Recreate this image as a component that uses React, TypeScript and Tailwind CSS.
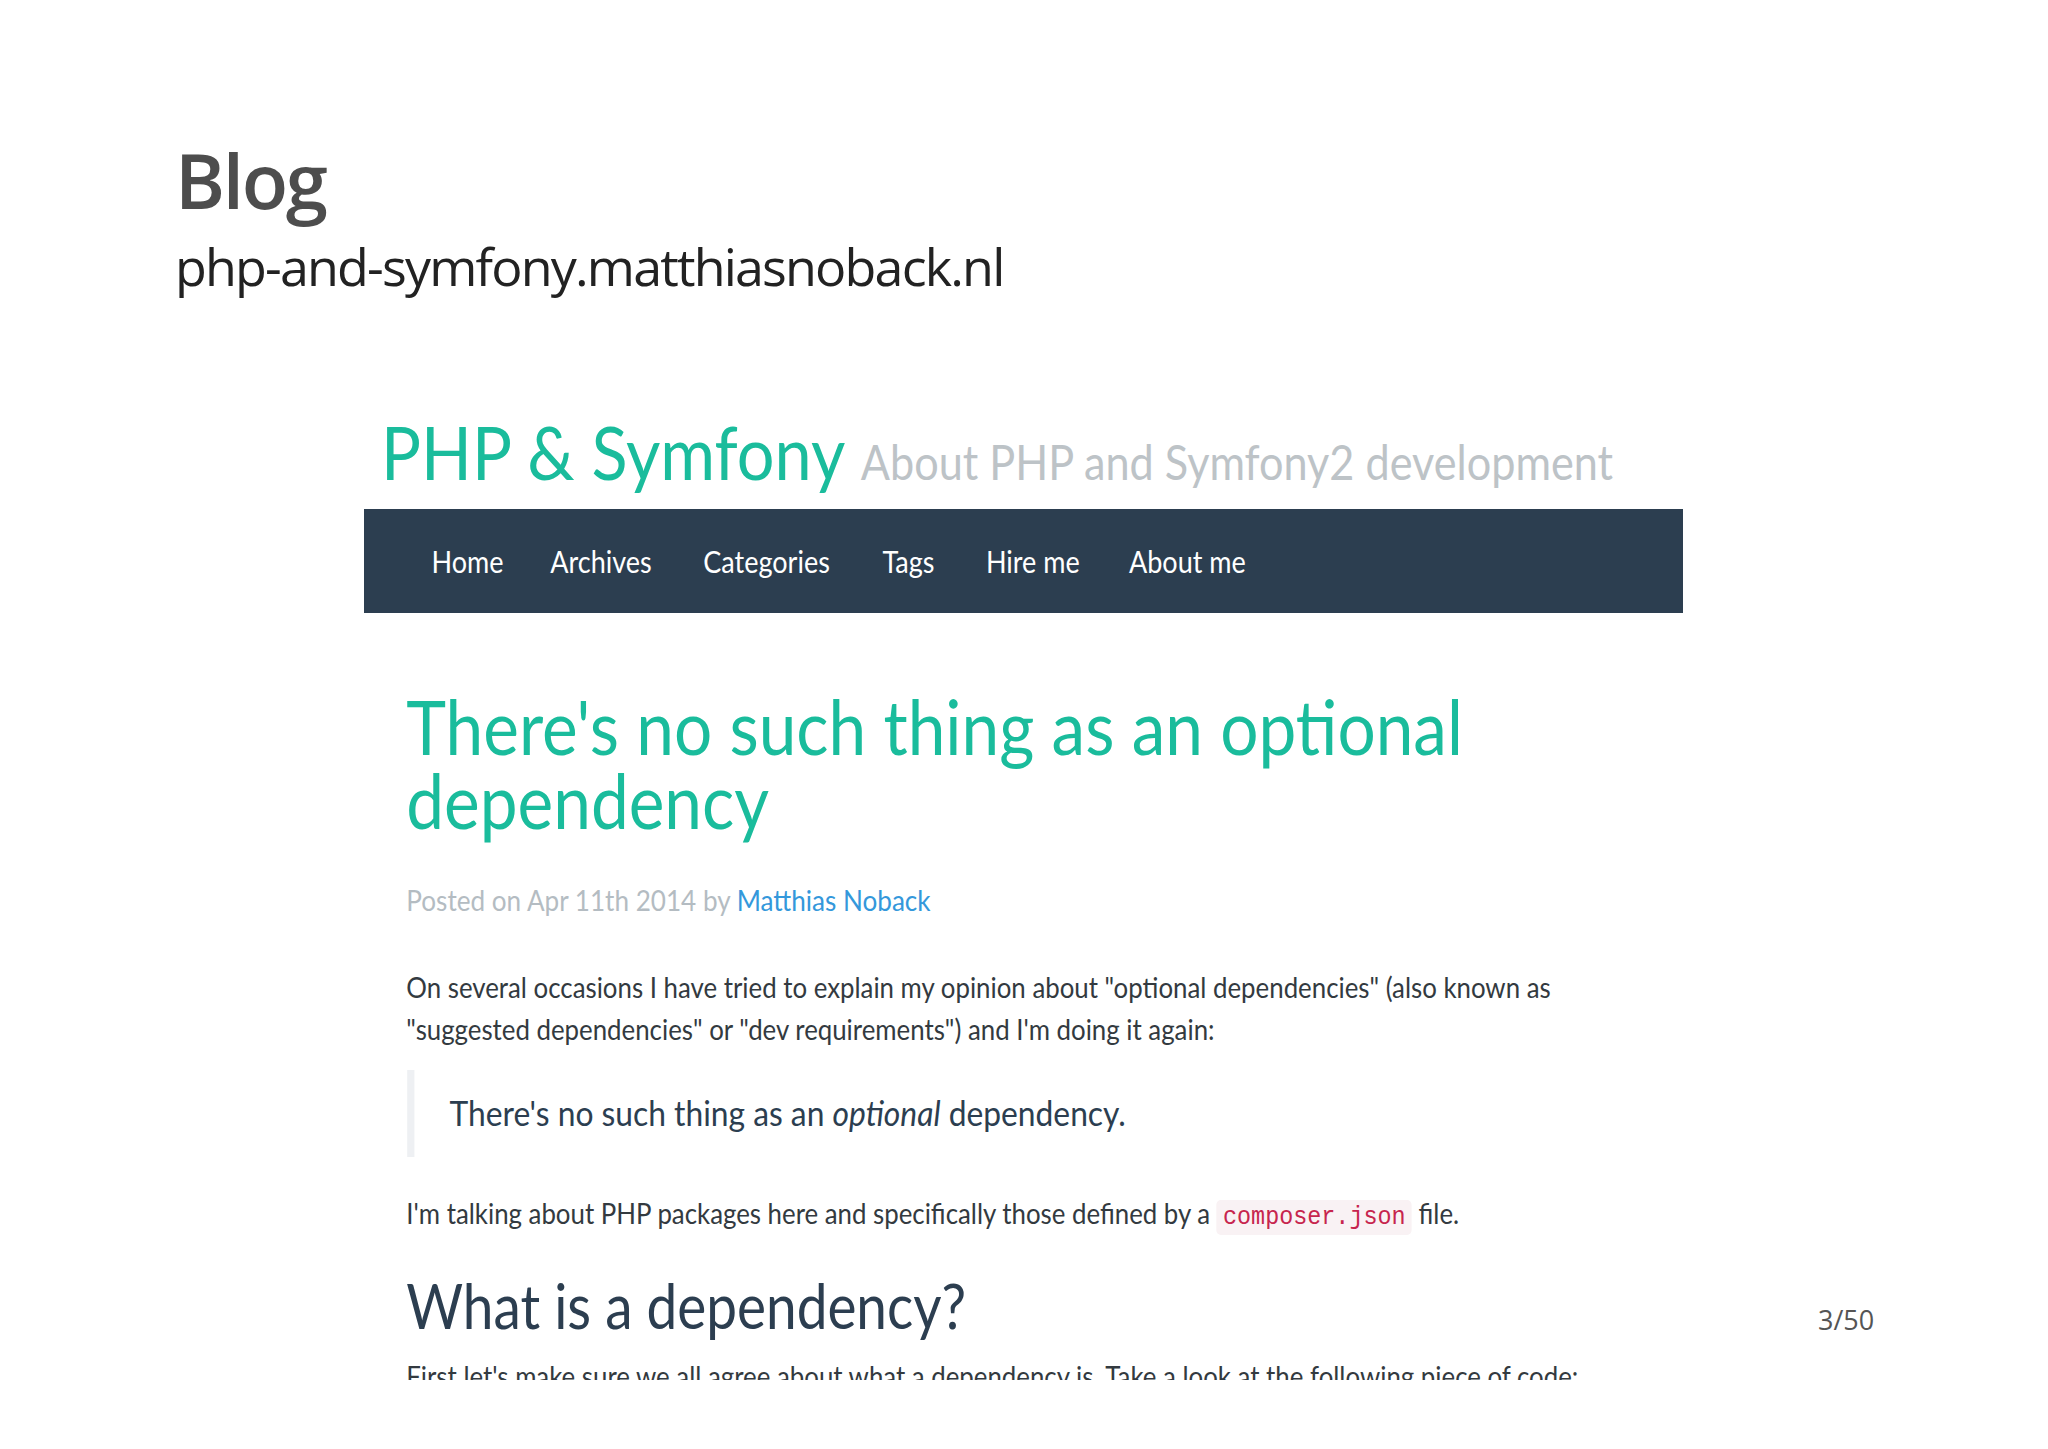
const NAV = [
  { label: "Home", w: "w-[132px]" },
  { label: "Archives", w: "w-[170px]" },
  { label: "Categories", w: "w-[199px]" },
  { label: "Tags", w: "w-[115px]" },
  { label: "Hire me", w: "w-[159px]" },
  { label: "About me", w: "w-[180px]" },
];

// The blog screenshot on the slide is squeezed horizontally, so the page
// inside is laid out at full width and scaled down on x only.
function BlogShot() {
  return (
    <div className="ml-[364px] mt-[99px] h-[980px] w-[1319px] overflow-hidden">
      <div className="w-[1466px] origin-top-left scale-x-[0.9] font-['Lato',sans-serif]">
        <div className="flex h-[109px] items-baseline pl-[19px] pt-[2px] leading-[100px]">
          <span className="inline-block w-[533px] text-[74px] text-[#1abc9c]">PHP &amp; Symfony</span>
          <span className="text-[48px] text-[#bdc3c7]">About PHP and Symfony2 development</span>
        </div>
        <nav className="flex h-[104px] bg-[#2c3e50] pl-[75px] text-[30px] leading-[104px] text-white">
          {NAV.map((n) => (
            <span key={n.label} className={n.w}>
              {n.label}
            </span>
          ))}
        </nav>
        <div className="pl-[47px]">
          <h1 className="mt-[76px] text-[75px] leading-[74px] text-[#1abc9c]">
            There's no such thing as an optional
            <br />
            dependency
          </h1>
          <p className="mt-[42.5px] text-[29px] leading-[40px] text-[#b4bcc2]">
            Posted on Apr 11th 2014 by <span className="text-[#3498db]">Matthias Noback</span>
          </p>
          <p className="mt-[46px] text-[28.7px] leading-[42px] text-[#333a40]">
            On several occasions I have tried to explain my opinion about "optional dependencies" (also known as
            <br />
            "suggested dependencies" or "dev requirements") and I'm doing it again:
          </p>
          <blockquote className="ml-px mt-[20px] h-[87px] border-l-[8px] border-[#eef0f3] pl-[39px] text-[35.3px] leading-[85px] text-[#2c3e50]">
            There's no such thing as an <em>optional</em> dependency.
          </blockquote>
          <p className="mt-[35px] text-[28.7px] leading-[42px] text-[#333a40]">
            I'm talking about PHP packages here and specifically those defined by a{" "}
            <code className="inline-block rounded-[5px] bg-[#f9f2f4] px-[7px] align-baseline font-['Liberation_Mono',monospace] text-[26px] leading-[35px] text-[#c7254e]">
              composer.json
            </code>{" "}
            file.
          </p>
          <h2 className="mt-[36px] text-[61px] leading-[70px] text-[#2c3e50]">What is a dependency?</h2>
          <p className="mt-[14px] text-[28.7px] leading-[42px] text-[#333a40]">
            First let's make sure we all agree about what a dependency is. Take a look at the following piece of code:
          </p>
        </div>
      </div>
    </div>
  );
}

export default function App() {
  return (
    <div className="relative h-[1449px] w-[2048px] overflow-hidden bg-white font-['Open_Sans',sans-serif]">
      <div className="pl-[175px] pt-[134.5px]">
        <h1 className="text-[76px] font-semibold leading-[90px] tracking-[-0.03em] text-[#4d4d4d]">Blog</h1>
        <p className="mt-[6.5px] text-[52px] leading-[70px] tracking-[-0.035em] text-[#222]">
          php-and-symfony.matthiasnoback.nl
        </p>
      </div>
      <BlogShot />
      <div className="absolute left-[1818px] top-[1301.5px] text-[27px] leading-[36px] text-[#555]">3/50</div>
    </div>
  );
}
